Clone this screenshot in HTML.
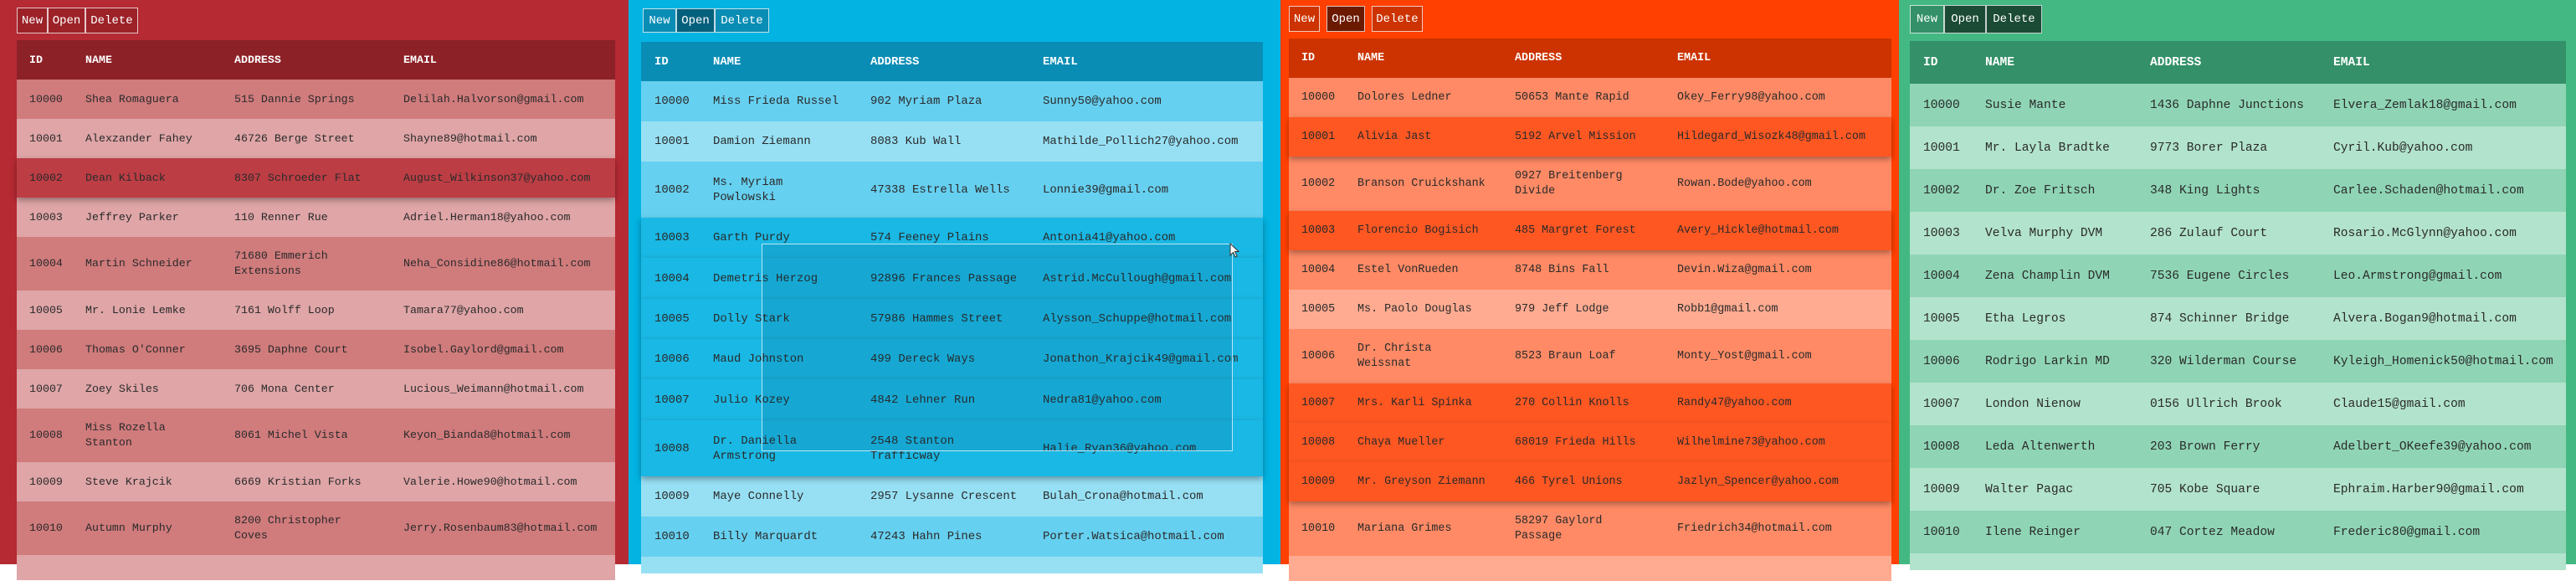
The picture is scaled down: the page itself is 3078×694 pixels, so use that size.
<!DOCTYPE html>
<html><head><meta charset="utf-8"><style>
*{margin:0;padding:0;box-sizing:border-box}
body{width:3078px;height:674px;overflow:hidden;position:relative;font-family:"Liberation Mono",monospace;color:#2a2a2a}
.p{position:absolute;top:0;height:674px}
.b{position:absolute;display:flex}
.b span{border:1px solid rgba(255,255,255,.75);color:#fff;display:flex;align-items:center;justify-content:center;font-size:14px}
.t{position:absolute}
.r{display:flex;align-items:center;line-height:18px;position:relative}
.r span{display:block;white-space:nowrap}
.h{color:#fff;font-weight:bold}
.s{box-shadow:0 3px 7px rgba(0,0,0,.35);z-index:2}
</style></head><body>

<!-- Panel 1 -->
<div class="p" style="left:0;width:751px;background:#b52a33">
<div class="b" style="left:20px;top:9px;height:31px"><span style="width:37px;background:#9c2228">New</span><span style="width:45px;background:#9c2228">Open</span><span style="width:63px;background:#9c2228">Delete</span></div>
<div class="t" style="left:20px;top:48px;width:715px;font-size:13.3px">
<div class="r h" style="height:47px;background:#8c2127;padding-left:15px"><span style="width:67px">ID</span><span style="width:178px">NAME</span><span style="width:202px">ADDRESS</span><span>EMAIL</span></div>
<div class="r" style="height:47px;background:#d07b7c;padding-left:15px"><span style="width:67px">10000</span><span style="width:178px">Shea Romaguera</span><span style="width:202px">515 Dannie Springs</span><span>Delilah.Halvorson@gmail.com</span></div>
<div class="r" style="height:47px;background:#dfa5a7;padding-left:15px"><span style="width:67px">10001</span><span style="width:178px">Alexzander Fahey</span><span style="width:202px">46726 Berge Street</span><span>Shayne89@hotmail.com</span></div>
<div class="r s" style="height:47px;background:#bc3d44;padding-left:15px"><span style="width:67px">10002</span><span style="width:178px">Dean Kilback</span><span style="width:202px">8307 Schroeder Flat</span><span>August_Wilkinson37@yahoo.com</span></div>
<div class="r" style="height:47px;background:#dfa5a7;padding-left:15px"><span style="width:67px">10003</span><span style="width:178px">Jeffrey Parker</span><span style="width:202px">110 Renner Rue</span><span>Adriel.Herman18@yahoo.com</span></div>
<div class="r" style="height:64px;background:#d07b7c;padding-left:15px"><span style="width:67px">10004</span><span style="width:178px">Martin Schneider</span><span style="width:202px">71680 Emmerich<br>Extensions</span><span>Neha_Considine86@hotmail.com</span></div>
<div class="r" style="height:47px;background:#dfa5a7;padding-left:15px"><span style="width:67px">10005</span><span style="width:178px">Mr. Lonie Lemke</span><span style="width:202px">7161 Wolff Loop</span><span>Tamara77@yahoo.com</span></div>
<div class="r" style="height:47px;background:#d07b7c;padding-left:15px"><span style="width:67px">10006</span><span style="width:178px">Thomas O'Conner</span><span style="width:202px">3695 Daphne Court</span><span>Isobel.Gaylord@gmail.com</span></div>
<div class="r" style="height:47px;background:#dfa5a7;padding-left:15px"><span style="width:67px">10007</span><span style="width:178px">Zoey Skiles</span><span style="width:202px">706 Mona Center</span><span>Lucious_Weimann@hotmail.com</span></div>
<div class="r" style="height:64px;background:#d07b7c;padding-left:15px"><span style="width:67px">10008</span><span style="width:178px">Miss Rozella<br>Stanton</span><span style="width:202px">8061 Michel Vista</span><span>Keyon_Bianda8@hotmail.com</span></div>
<div class="r" style="height:47px;background:#dfa5a7;padding-left:15px"><span style="width:67px">10009</span><span style="width:178px">Steve Krajcik</span><span style="width:202px">6669 Kristian Forks</span><span>Valerie.Howe90@hotmail.com</span></div>
<div class="r" style="height:64px;background:#d07b7c;padding-left:15px"><span style="width:67px">10010</span><span style="width:178px">Autumn Murphy</span><span style="width:202px">8200 Christopher<br>Coves</span><span>Jerry.Rosenbaum83@hotmail.com</span></div>
<div class="r" style="height:30px;background:#dfa5a7"></div>
</div></div>

<!-- Panel 2 -->
<div class="p" style="left:751px;width:779px;background:#03b3e2">
<div class="b" style="left:17px;top:10px;height:29px"><span style="width:40px;background:#0a8db5">New</span><span style="width:46px;background:#05607c">Open</span><span style="width:65px;background:#0a8db5">Delete</span></div>
</div>
<div class="t" style="left:766px;top:50px;width:743px;font-size:13.9px">
<div class="r h" style="height:47px;background:#0a8db5;padding-left:16px"><span style="width:70px">ID</span><span style="width:188px">NAME</span><span style="width:206px">ADDRESS</span><span>EMAIL</span></div>
<div class="r" style="height:48px;background:#66d0f0;padding-left:16px"><span style="width:70px">10000</span><span style="width:188px">Miss Frieda Russel</span><span style="width:206px">902 Myriam Plaza</span><span>Sunny50@yahoo.com</span></div>
<div class="r" style="height:48px;background:#97e0f4;padding-left:16px"><span style="width:70px">10001</span><span style="width:188px">Damion Ziemann</span><span style="width:206px">8083 Kub Wall</span><span>Mathilde_Pollich27@yahoo.com</span></div>
<div class="r" style="height:67px;background:#66d0f0;padding-left:16px"><span style="width:70px">10002</span><span style="width:188px">Ms. Myriam<br>Powlowski</span><span style="width:206px">47338 Estrella Wells</span><span>Lonnie39@gmail.com</span></div>
<div class="r s" style="height:48px;background:#1ab8e4;padding-left:16px"><span style="width:70px">10003</span><span style="width:188px">Garth Purdy</span><span style="width:206px">574 Feeney Plains</span><span>Antonia41@yahoo.com</span></div>
<div class="r s" style="height:49px;background:#1ab8e4;padding-left:16px"><span style="width:70px">10004</span><span style="width:188px">Demetris Herzog</span><span style="width:206px">92896 Frances Passage</span><span>Astrid.McCullough@gmail.com</span></div>
<div class="r s" style="height:48px;background:#1ab8e4;padding-left:16px"><span style="width:70px">10005</span><span style="width:188px">Dolly Stark</span><span style="width:206px">57986 Hammes Street</span><span>Alysson_Schuppe@hotmail.com</span></div>
<div class="r s" style="height:48px;background:#1ab8e4;padding-left:16px"><span style="width:70px">10006</span><span style="width:188px">Maud Johnston</span><span style="width:206px">499 Dereck Ways</span><span>Jonathon_Krajcik49@gmail.com</span></div>
<div class="r s" style="height:49px;background:#1ab8e4;padding-left:16px"><span style="width:70px">10007</span><span style="width:188px">Julio Kozey</span><span style="width:206px">4842 Lehner Run</span><span>Nedra81@yahoo.com</span></div>
<div class="r s" style="height:67px;background:#1ab8e4;padding-left:16px"><span style="width:70px">10008</span><span style="width:188px">Dr. Daniella<br>Armstrong</span><span style="width:206px">2548 Stanton<br>Trafficway</span><span>Halie_Ryan36@yahoo.com</span></div>
<div class="r" style="height:48px;background:#97e0f4;padding-left:16px"><span style="width:70px">10009</span><span style="width:188px">Maye Connelly</span><span style="width:206px">2957 Lysanne Crescent</span><span>Bulah_Crona@hotmail.com</span></div>
<div class="r" style="height:48px;background:#66d0f0;padding-left:16px"><span style="width:70px">10010</span><span style="width:188px">Billy Marquardt</span><span style="width:206px">47243 Hahn Pines</span><span>Porter.Watsica@hotmail.com</span></div>
<div class="r" style="height:20px;background:#97e0f4"></div>
</div>
<div style="position:absolute;left:910px;top:291px;width:563px;height:248px;background:rgba(0,60,90,.12);border:1px solid rgba(220,240,250,.85);z-index:5"></div>
<svg style="position:absolute;left:1469px;top:290px;z-index:6" width="14" height="20" viewBox="0 0 14 20"><path d="M1 1 L1 15 L4.5 11.5 L7 17 L9 16 L6.5 10.5 L11 10.5 Z" fill="#fff" stroke="#333" stroke-width="1"/></svg>

<!-- Panel 3 -->
<div class="p" style="left:1530px;width:739px;background:#ff4000">
<div class="b" style="left:10px;top:7px;height:31px;gap:8px"><span style="width:37px;background:#cc3300">New</span><span style="width:46px;background:#6b1a00">Open</span><span style="width:61px;background:#cc3300">Delete</span></div>
</div>
<div class="t" style="left:1540px;top:46px;width:720px;font-size:13.4px">
<div class="r h" style="height:47px;background:#cc3300;padding-left:15px"><span style="width:67px">ID</span><span style="width:188px">NAME</span><span style="width:194px">ADDRESS</span><span>EMAIL</span></div>
<div class="r" style="height:47px;background:#ff8a65;padding-left:15px"><span style="width:67px">10000</span><span style="width:188px">Dolores Ledner</span><span style="width:194px">50653 Mante Rapid</span><span>Okey_Ferry98@yahoo.com</span></div>
<div class="r s" style="height:47px;background:#ff5722;padding-left:15px"><span style="width:67px">10001</span><span style="width:188px">Alivia Jast</span><span style="width:194px">5192 Arvel Mission</span><span>Hildegard_Wisozk48@gmail.com</span></div>
<div class="r" style="height:65px;background:#ff8a65;padding-left:15px"><span style="width:67px">10002</span><span style="width:188px">Branson Cruickshank</span><span style="width:194px">0927 Breitenberg<br>Divide</span><span>Rowan.Bode@yahoo.com</span></div>
<div class="r s" style="height:47px;background:#ff5722;padding-left:15px"><span style="width:67px">10003</span><span style="width:188px">Florencio Bogisich</span><span style="width:194px">485 Margret Forest</span><span>Avery_Hickle@hotmail.com</span></div>
<div class="r" style="height:47px;background:#ff8a65;padding-left:15px"><span style="width:67px">10004</span><span style="width:188px">Estel VonRueden</span><span style="width:194px">8748 Bins Fall</span><span>Devin.Wiza@gmail.com</span></div>
<div class="r" style="height:47px;background:#ffab91;padding-left:15px"><span style="width:67px">10005</span><span style="width:188px">Ms. Paolo Douglas</span><span style="width:194px">979 Jeff Lodge</span><span>Robb1@gmail.com</span></div>
<div class="r" style="height:65px;background:#ff8a65;padding-left:15px"><span style="width:67px">10006</span><span style="width:188px">Dr. Christa<br>Weissnat</span><span style="width:194px">8523 Braun Loaf</span><span>Monty_Yost@gmail.com</span></div>
<div class="r s" style="height:47px;background:#ff5722;padding-left:15px"><span style="width:67px">10007</span><span style="width:188px">Mrs. Karli Spinka</span><span style="width:194px">270 Collin Knolls</span><span>Randy47@yahoo.com</span></div>
<div class="r s" style="height:47px;background:#ff5722;padding-left:15px"><span style="width:67px">10008</span><span style="width:188px">Chaya Mueller</span><span style="width:194px">68019 Frieda Hills</span><span>Wilhelmine73@yahoo.com</span></div>
<div class="r s" style="height:47px;background:#ff5722;padding-left:15px"><span style="width:67px">10009</span><span style="width:188px">Mr. Greyson Ziemann</span><span style="width:194px">466 Tyrel Unions</span><span>Jazlyn_Spencer@yahoo.com</span></div>
<div class="r" style="height:65px;background:#ff8a65;padding-left:15px"><span style="width:67px">10010</span><span style="width:188px">Mariana Grimes</span><span style="width:194px">58297 Gaylord<br>Passage</span><span>Friedrich34@hotmail.com</span></div>
<div class="r" style="height:30px;background:#ffab91"></div>
</div>

<!-- Panel 4 -->
<div class="p" style="left:2269px;width:809px;background:#43b883">
<div class="b" style="left:13px;top:6px;height:34px"><span style="width:41px;background:#339068">New</span><span style="width:50px;background:#1b4a35">Open</span><span style="width:67px;background:#1b4a35">Delete</span></div>
<div class="t" style="left:13px;top:49px;width:784px;font-size:14.6px">
<div class="r h" style="height:51px;background:#339068;padding-left:16px"><span style="width:74px">ID</span><span style="width:197px">NAME</span><span style="width:219px">ADDRESS</span><span>EMAIL</span></div>
<div class="r" style="height:51px;background:#8fd5b5;padding-left:16px"><span style="width:74px">10000</span><span style="width:197px">Susie Mante</span><span style="width:219px">1436 Daphne Junctions</span><span>Elvera_Zemlak18@gmail.com</span></div>
<div class="r" style="height:51px;background:#b2e3cc;padding-left:16px"><span style="width:74px">10001</span><span style="width:197px">Mr. Layla Bradtke</span><span style="width:219px">9773 Borer Plaza</span><span>Cyril.Kub@yahoo.com</span></div>
<div class="r" style="height:51px;background:#8fd5b5;padding-left:16px"><span style="width:74px">10002</span><span style="width:197px">Dr. Zoe Fritsch</span><span style="width:219px">348 King Lights</span><span>Carlee.Schaden@hotmail.com</span></div>
<div class="r" style="height:51px;background:#b2e3cc;padding-left:16px"><span style="width:74px">10003</span><span style="width:197px">Velva Murphy DVM</span><span style="width:219px">286 Zulauf Court</span><span>Rosario.McGlynn@yahoo.com</span></div>
<div class="r" style="height:51px;background:#8fd5b5;padding-left:16px"><span style="width:74px">10004</span><span style="width:197px">Zena Champlin DVM</span><span style="width:219px">7536 Eugene Circles</span><span>Leo.Armstrong@gmail.com</span></div>
<div class="r" style="height:51px;background:#b2e3cc;padding-left:16px"><span style="width:74px">10005</span><span style="width:197px">Etha Legros</span><span style="width:219px">874 Schinner Bridge</span><span>Alvera.Bogan9@hotmail.com</span></div>
<div class="r" style="height:51px;background:#8fd5b5;padding-left:16px"><span style="width:74px">10006</span><span style="width:197px">Rodrigo Larkin MD</span><span style="width:219px">320 Wilderman Course</span><span>Kyleigh_Homenick50@hotmail.com</span></div>
<div class="r" style="height:51px;background:#b2e3cc;padding-left:16px"><span style="width:74px">10007</span><span style="width:197px">London Nienow</span><span style="width:219px">0156 Ullrich Brook</span><span>Claude15@gmail.com</span></div>
<div class="r" style="height:51px;background:#8fd5b5;padding-left:16px"><span style="width:74px">10008</span><span style="width:197px">Leda Altenwerth</span><span style="width:219px">203 Brown Ferry</span><span>Adelbert_OKeefe39@yahoo.com</span></div>
<div class="r" style="height:51px;background:#b2e3cc;padding-left:16px"><span style="width:74px">10009</span><span style="width:197px">Walter Pagac</span><span style="width:219px">705 Kobe Square</span><span>Ephraim.Harber90@gmail.com</span></div>
<div class="r" style="height:51px;background:#8fd5b5;padding-left:16px"><span style="width:74px">10010</span><span style="width:197px">Ilene Reinger</span><span style="width:219px">047 Cortez Meadow</span><span>Frederic80@gmail.com</span></div>
<div class="r" style="height:20px;background:#b2e3cc"></div>
</div></div>
</body></html>
